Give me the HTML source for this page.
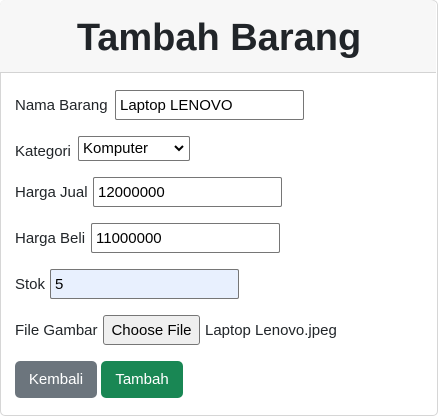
<!DOCTYPE html>
<html><head><meta charset="utf-8"><style>
body{margin:0;width:438px;height:419px;background:#fff;font-family:"Liberation Sans",sans-serif;color:#212529;position:relative;overflow:hidden}
.card{position:absolute;left:0;top:0;width:436px;height:414px;border:1px solid #d6d6d6;border-radius:5px}
.hd{position:absolute;left:0;top:0;width:436px;height:72px;background:#f7f7f7;border-bottom:1px solid #d3d3d3;border-radius:5px 5px 0 0}
h1{position:absolute;left:0;width:438px;top:15px;margin:0;text-align:center;font-size:38px;font-weight:bold;line-height:46px;color:#212529}
.l{position:absolute;left:15px;font-size:15px;line-height:18px;margin-top:1px}
.in{position:absolute;border:1px solid #767676;border-radius:2px;box-sizing:border-box;width:189px;height:30px;font-size:15px;padding:4px 0 0 4px;line-height:22px;color:#000}
.btn{position:absolute;top:361px;width:82px;height:37px;border-radius:5px;color:#fff;font-size:15px;line-height:38px;text-align:center}
</style></head><body>
<div class="card"></div><div class="hd"></div>
<h1>Tambah Barang</h1>
<div class="l" style="top:96px">Nama Barang</div><div class="in" style="left:115px;top:90px">Laptop LENOVO</div>
<div class="l" style="top:142px">Kategori</div>
<div class="in" style="left:78px;top:136px;width:112px;height:25px;padding-top:1px">Komputer<svg style="position:absolute;right:5px;top:8px" width="10" height="7" viewBox="0 0 10 7"><path d="M1 1l4 4 4-4" stroke="#000" stroke-width="2" fill="none"/></svg></div>
<div class="l" style="top:183px">Harga Jual</div><div class="in" style="left:93px;top:177px">12000000</div>
<div class="l" style="top:229px">Harga Beli</div><div class="in" style="left:91px;top:223px">11000000</div>
<div class="l" style="top:275px">Stok</div><div class="in" style="left:50px;top:269px;background:#e8f0fe">5</div>
<div class="l" style="top:321px">File Gambar</div>
<div class="in" style="left:103px;top:315px;width:97px;background:#efefef;text-align:center;padding-left:0;border-radius:3px">Choose File</div>
<div class="l" style="left:205px;top:321px">Laptop Lenovo.jpeg</div>
<div class="btn" style="left:15px;background:#6c757d">Kembali</div>
<div class="btn" style="left:101px;background:#198754">Tambah</div>
</body></html>
